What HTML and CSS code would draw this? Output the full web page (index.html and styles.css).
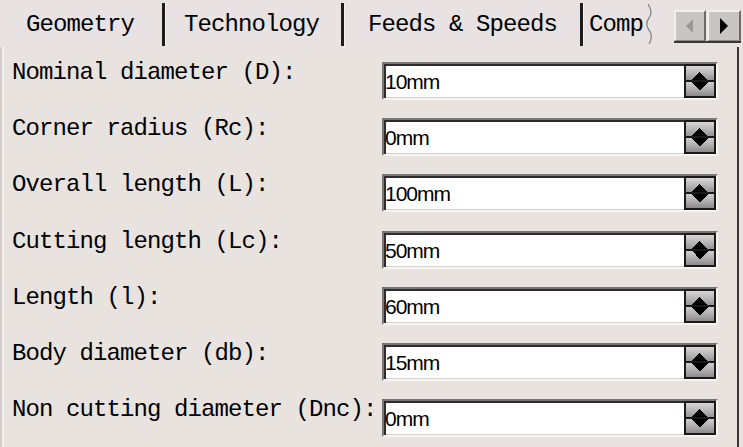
FILE: index.html
```html
<!DOCTYPE html>
<html>
<head>
<meta charset="utf-8">
<link rel="stylesheet" href="styles.css">
</head>
<body>
<div class="window">
  <div class="tabstrip">
    <div class="tab tab-geo">Geometry</div>
    <div class="sep"></div>
    <div class="tab tab-tech">Technology</div>
    <div class="sep"></div>
    <div class="tab tab-feeds">Feeds &amp; Speeds</div>
    <div class="sep"></div>
    <div class="tab tab-comp">Comp</div>
    <svg class="wave" width="12" height="40" viewBox="0 0 12 40"><path d="M5 0 C 9 6, 9 10, 6 14 C 3 18, 3 22, 6 26 C 9 30, 9 35, 6 40" fill="none" stroke="#8a8686" stroke-width="1.3"/></svg>
    <div class="scrollbtns">
      <div class="sbtn"><svg width="10" height="16" viewBox="0 0 10 16"><polygon points="8,1 8,15 1,8" fill="#9c9898"/></svg></div>
      <div class="sbtn"><svg width="10" height="18" viewBox="0 0 10 18"><polygon points="1,1 1,17 9,9" fill="#000"/></svg></div>
    </div>
  </div>
  <div class="panel">
    <div class="form">
      <div class="label">Nominal diameter (D):</div>
      <div class="field"><span class="value">10mm</span><span class="spin"></span></div>
      <div class="label">Corner radius (Rc):</div>
      <div class="field"><span class="value">0mm</span><span class="spin"></span></div>
      <div class="label">Overall length (L):</div>
      <div class="field"><span class="value">100mm</span><span class="spin"></span></div>
      <div class="label">Cutting length (Lc):</div>
      <div class="field"><span class="value">50mm</span><span class="spin"></span></div>
      <div class="label">Length (l):</div>
      <div class="field"><span class="value">60mm</span><span class="spin"></span></div>
      <div class="label">Body diameter (db):</div>
      <div class="field"><span class="value">15mm</span><span class="spin"></span></div>
      <div class="label">Non cutting diameter (Dnc):</div>
      <div class="field"><span class="value">0mm</span><span class="spin"></span></div>
    </div>
  </div>
</div>
</body>
</html>
```
FILE: styles.css
```css
html, body {
  margin: 0;
  padding: 0;
}
body {
  width: 743px;
  height: 447px;
  overflow: hidden;
  background: #e9e3e0;
  font-family: "Liberation Mono", "DejaVu Sans Mono", monospace;
  color: #000;
}
.window {
  width: 743px;
  height: 447px;
  box-shadow: inset 2px 0 0 #d3cdcb, inset 4px 0 0 #f3efed;
}
.tabstrip {
  height: 47px;
  box-sizing: border-box;
  padding-top: 3px;
  display: flex;
  align-items: flex-start;
  background: #e8e2e2;
}
.tab {
  font-size: 24px;
  letter-spacing: -0.9px;
  line-height: 24px;
  margin-top: 10px;
  white-space: nowrap;
}
.tab-geo { padding-left: 26px; padding-right: 28px; }
.tab-tech { padding-left: 18px; padding-right: 22px; }
.tab-feeds { padding-left: 23px; padding-right: 23px; }
.tab-comp { padding-left: 5px; padding-right: 0; }
.sep {
  width: 3px;
  height: 43px;
  background: #1e1c1c;
  border-right: 1px solid #f6f2f2;
}
.wave {
  margin-left: 0;
  margin-top: 1px;
}
.scrollbtns {
  margin-left: auto;
  margin-right: 2px;
  margin-top: 7px;
  display: flex;
  gap: 1px;
  box-shadow: 0 2px 0 #3a3838;
}
.sbtn {
  width: 32px;
  height: 31px;
  box-sizing: border-box;
  background: #c9c5c5;
  border-top: 2px solid #f2efef;
  border-left: 2px solid #f2efef;
  border-right: 2px solid #6e6a6a;
  border-bottom: 1px solid #8a8686;
  display: flex;
  align-items: center;
  justify-content: center;
}
.sbtn + .sbtn { width: 34px; }
.panel {
  width: 739px;
  height: 400px;
  box-sizing: border-box;
  border-right: 2px solid #3a3838;
  padding-top: 15px;
  padding-left: 12px;
}
.form {
  display: grid;
  grid-template-columns: 370px 336px;
  grid-auto-rows: 38px;
  row-gap: 18.2px;
}
.label {
  font-size: 24px;
  letter-spacing: -0.9px;
  line-height: 24px;
  margin-top: -1px;
  white-space: nowrap;
}
.field {
  box-sizing: border-box;
  height: 38px;
  background: #fff;
  border-top: 2px solid #7a7676;
  border-left: 2px solid #7a7676;
  border-bottom: 2px solid #f7f4f2;
  border-right: 2px solid #f7f4f2;
  box-shadow: inset 2px 2px 0 #2e2c2c, inset -1px -1px 0 #d4d0ce;
  display: flex;
  align-items: center;
}
.value {
  font-family: "Liberation Sans", Arial, sans-serif;
  font-size: 21px;
  letter-spacing: -1px;
  line-height: 24px;
  padding-left: 1px;
  margin-top: 2px;
}
.spin {
  margin-left: auto;
  width: 32px;
  height: 34px;
  background: #1a1a1a;
  position: relative;
  flex: none;
}
.spin::before,
.spin::after {
  content: "";
  position: absolute;
  left: 2px;
  width: 28px;
  height: 14px;
  background-size: 8px 8px, 8px 8px, 100% 100%;
  background-repeat: no-repeat;
}
.spin::before {
  top: 2px;
  background-image:
    linear-gradient(to bottom right, transparent 50%, #000 50%),
    linear-gradient(to bottom left, transparent 50%, #000 50%),
    linear-gradient(#d8d6d6, #b2b0b0 60%, #949292);
  background-position: 6px 6px, 14px 6px, 0 0;
}
.spin::after {
  top: 18px;
  background-image:
    linear-gradient(to top right, transparent 50%, #000 50%),
    linear-gradient(to top left, transparent 50%, #000 50%),
    linear-gradient(#cfcdcd, #aaa8a8 60%, #8c8a8a);
  background-position: 6px 0, 14px 0, 0 0;
}
```
